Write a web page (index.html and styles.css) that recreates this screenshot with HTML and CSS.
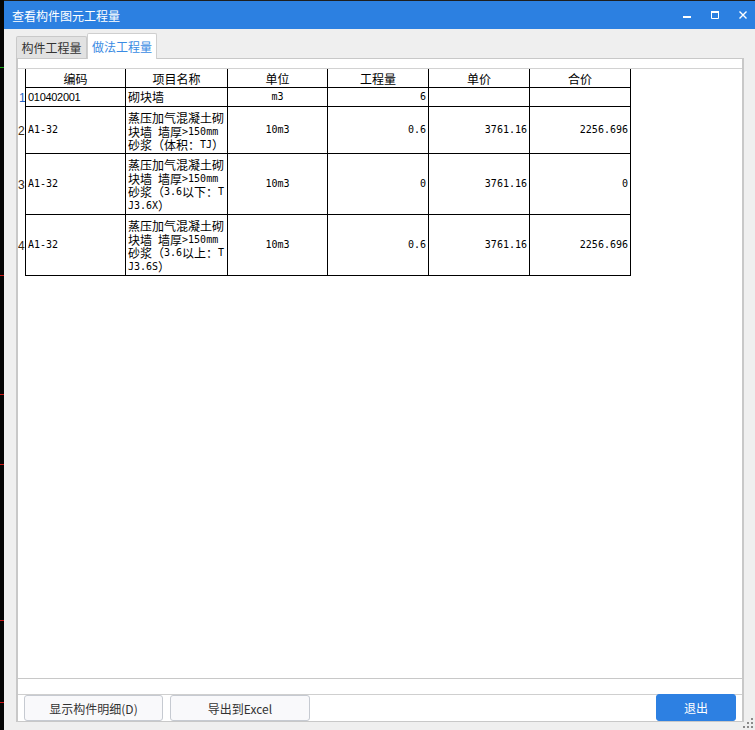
FILE: index.html
```
<!DOCTYPE html>
<html lang="zh">
<head>
<meta charset="utf-8">
<title>查看构件图元工程量</title>
<link rel="stylesheet" href="styles.css">
</head>
<body>
<div class="desk">
  <div class="strip"></div>
  <div class="window">
    <div class="titlebar">
      <span class="title">查看构件图元工程量</span>
      <div class="controls">
        <svg width="8" height="8" viewBox="0 0 8 8"><rect x="0" y="5" width="8" height="2" fill="#fff"/></svg>
        <svg width="8" height="8" viewBox="0 0 8 8"><path d="M0.5 1.5H7.5V7.5H0.5Z" fill="none" stroke="#fff" stroke-width="1"/><rect x="0" y="0" width="8" height="2" fill="#fff"/></svg>
        <svg width="8" height="8" viewBox="0 0 8 8"><path d="M0.5 0.5L7.5 7.5M7.5 0.5L0.5 7.5" stroke="#fff" stroke-width="1.4"/></svg>
      </div>
    </div>
    <div class="tabs">
      <div class="tab">构件工程量</div>
      <div class="tab active">做法工程量</div>
    </div>
    <div class="panel">
      <div class="grid">
        <div class="row head">
          <div class="rh"></div>
          <div class="c ctr">编码</div>
          <div class="c ctr">项目名称</div>
          <div class="c ctr">单位</div>
          <div class="c ctr">工程量</div>
          <div class="c ctr">单价</div>
          <div class="c ctr last">合价</div>
        </div>
        <div class="row r1">
          <div class="rh sel">1</div>
          <div class="c code">010402001</div>
          <div class="c">砌块墙</div>
          <div class="c ctr m">m3</div>
          <div class="c num m">6</div>
          <div class="c num m"></div>
          <div class="c num m last"></div>
        </div>
        <div class="row r2">
          <div class="rh">2</div>
          <div class="c m">A1-32</div>
          <div class="c desc">
            <div class="ln">蒸压加气混凝土砌</div>
            <div class="ln">块墙<span class="m"> </span>墙厚<span class="m">&gt;150mm</span></div>
            <div class="ln">砂浆（体积：<span class="m">TJ</span>）</div>
          </div>
          <div class="c ctr m">10m3</div>
          <div class="c num m">0.6</div>
          <div class="c num m">3761.16</div>
          <div class="c num m last">2256.696</div>
        </div>
        <div class="row r3">
          <div class="rh">3</div>
          <div class="c m">A1-32</div>
          <div class="c desc">
            <div class="ln">蒸压加气混凝土砌</div>
            <div class="ln">块墙<span class="m"> </span>墙厚<span class="m">&gt;150mm</span></div>
            <div class="ln">砂浆（<span class="m">3.6</span>以下：<span class="m">T</span></div>
            <div class="ln"><span class="m">J3.6X</span>）</div>
          </div>
          <div class="c ctr m">10m3</div>
          <div class="c num m">0</div>
          <div class="c num m">3761.16</div>
          <div class="c num m last">0</div>
        </div>
        <div class="row r3">
          <div class="rh">4</div>
          <div class="c m">A1-32</div>
          <div class="c desc">
            <div class="ln">蒸压加气混凝土砌</div>
            <div class="ln">块墙<span class="m"> </span>墙厚<span class="m">&gt;150mm</span></div>
            <div class="ln">砂浆（<span class="m">3.6</span>以上：<span class="m">T</span></div>
            <div class="ln"><span class="m">J3.6S</span>）</div>
          </div>
          <div class="c ctr m">10m3</div>
          <div class="c num m">0.6</div>
          <div class="c num m">3761.16</div>
          <div class="c num m last">2256.696</div>
        </div>
      </div>
      <div class="spacer"></div>
      <div class="btnbar">
        <button class="btn">显示构件明细(D)</button>
        <button class="btn">导出到Excel</button>
        <button class="btn primary">退出</button>
      </div>
    </div>
    <svg class="grip" width="10" height="10" viewBox="0 0 10 10">
      <rect x="8" y="0" width="2" height="2" fill="#8a8a8a"/>
      <rect x="4" y="4" width="2" height="2" fill="#8a8a8a"/>
      <rect x="8" y="4" width="2" height="2" fill="#8a8a8a"/>
      <rect x="0" y="8" width="2" height="2" fill="#8a8a8a"/>
      <rect x="4" y="8" width="2" height="2" fill="#8a8a8a"/>
      <rect x="8" y="8" width="2" height="2" fill="#8a8a8a"/>
    </svg>
  </div>
</div>
</body>
</html>
```
FILE: styles.css
```
html, body {
  margin: 0;
  padding: 0;
  width: 755px;
  height: 730px;
  overflow: hidden;
  background: #1e1e1e;
}

.desk {
  display: flex;
  height: 730px;
}

.strip {
  width: 4px;
  flex: none;
  background:
    linear-gradient(#17a317, #17a317) 0 67px / 4px 1px no-repeat,
    linear-gradient(#c81414, #c81414) 0 275px / 4px 1px no-repeat,
    linear-gradient(#c81414, #c81414) 0 394px / 4px 1px no-repeat,
    linear-gradient(#c81414, #c81414) 0 464px / 4px 1px no-repeat,
    linear-gradient(#c81414, #c81414) 0 620px / 4px 1px no-repeat,
    linear-gradient(#c81414, #c81414) 0 702px / 4px 1px no-repeat,
    #050505;
}

.window {
  position: relative;
  flex: 1;
  margin-top: 1px;
  background: #efefef;
  display: flex;
  flex-direction: column;
  font-family: "Noto Sans CJK SC", "Noto Sans", sans-serif;
  font-size: 12px;
  color: #222;
}

.titlebar {
  height: 28px;
  flex: none;
  background: #2c80e1;
  color: #fff;
  display: flex;
  align-items: center;
  padding-left: 8px;
}

.title {
  font-size: 12px;
  line-height: 14px;
  margin-top: 1px;
}

.controls {
  margin-left: auto;
  display: flex;
  align-items: center;
  gap: 20px;
  padding-right: 8px;
}

.controls svg {
  display: block;
}

.tabs {
  height: 29px;
  flex: none;
  display: flex;
  align-items: flex-end;
  padding-left: 12px;
  position: relative;
  z-index: 1;
}

.tab {
  width: 71px;
  height: 22px;
  box-sizing: border-box;
  border: 1px solid #c9c9c9;
  border-bottom: none;
  background: #e2e2e2;
  color: #333;
  text-align: center;
  line-height: 21px;
  border-radius: 2px 2px 0 0;
}

.tab.active {
  width: 70px;
  height: 26px;
  margin-bottom: -1px;
  background: #fff;
  color: #3a8be3;
  line-height: 25px;
  border-color: #cfcfcf;
}

.panel {
  flex: 1;
  margin: 0 11px 8px 12px;
  border: 1px solid #c8c8c8;
  border-left-width: 2px;
  border-right-width: 2px;
  background: #fff;
  display: flex;
  flex-direction: column;
  padding-top: 9px;
  min-height: 0;
}

.grid {
  flex: 1;
  border-top: 1px solid #d2d2d2;
  border-bottom: 1px solid #c8c8c8;
  background: #fff;
  overflow: hidden;
}

.row {
  display: grid;
  grid-template-columns: 7px 100px 102px 100px 101px 101px 102px;
  height: 19px;
}

.row.r2 { height: 47px; }
.row.r3 { height: 61px; }

.rh {
  display: flex;
  align-items: center;
  font-family: "Liberation Sans", Arial, sans-serif;
  font-size: 12px;
  color: #3a2a12;
  overflow: visible;
  white-space: nowrap;
}

.rh.sel {
  color: #2366c6;
  padding-left: 1px;
}

.c {
  border-left: 1px solid #000;
  border-bottom: 1px solid #000;
  box-sizing: border-box;
  display: flex;
  align-items: center;
  padding: 0 2px;
  font-size: 12px;
  line-height: 14px;
  color: #000;
  white-space: nowrap;
  overflow: hidden;
}

.c.last {
  border-right: 1px solid #000;
}

.head .c {
  padding-top: 1px;
}

.ctr {
  justify-content: center;
}

.num {
  justify-content: flex-end;
  padding-right: 2px;
}

.m {
  font-family: "DejaVu Sans Mono", "Liberation Mono", monospace;
  font-size: 10px;
}

.c.code {
  font-family: "Liberation Sans", Arial, sans-serif;
  font-size: 11px;
  letter-spacing: -0.3px;
}

.c.desc {
  display: flex;
  flex-direction: column;
  align-items: flex-start;
  justify-content: flex-start;
  padding-top: 4px;
}

.ln {
  height: 13.6px;
  line-height: 13.6px;
  display: flex;
  align-items: center;
  white-space: pre;
}

.ln .m {
  line-height: 13.6px;
}

.spacer {
  height: 15px;
  flex: none;
}

.btnbar {
  height: 26px;
  flex: none;
  border-top: 1px solid #cfcfcf;
  display: flex;
  align-items: stretch;
  gap: 7px;
  padding: 0 6px 0 6px;
}

.btn {
  font-family: "Noto Sans CJK SC", "Noto Sans", sans-serif;
  font-size: 12px;
  color: #333;
  background: #f9f9fb;
  border: 1px solid #c6cad1;
  border-radius: 3px;
  width: 139px;
  padding: 0;
  margin: 0;
}

.btn + .btn {
  width: 140px;
}

.btn.primary {
  margin-left: auto;
  width: 80px;
  margin-top: -1px;
  background: #2d80e2;
  border-color: #2d80e2;
  color: #fff;
}

.grip {
  position: absolute;
  right: 2px;
  bottom: 2px;
}
```
